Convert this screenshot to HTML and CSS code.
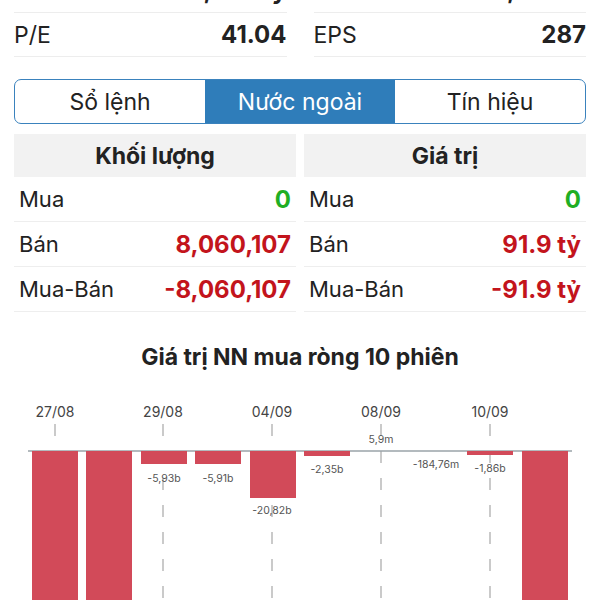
FILE: index.html
```html
<!DOCTYPE html>
<html lang="vi">
<head>
  <meta charset="UTF-8" />
  <meta name="viewport" content="width=device-width, initial-scale=1.0" />
  <title>Nước ngoài</title>
  <link rel="stylesheet" href="styles.css">
</head>
<body>
  <div class="page">
    <div class="stats">
      <div class="stat"><span>Vốn hóa</span><b>4,823 tỷ</b></div>
      <div class="stat"><span>KLCP</span><b>1,690 tr</b></div>
      <div class="stat"><span>P/E</span><b>41.04</b></div>
      <div class="stat"><span>EPS</span><b>287</b></div>
    </div>

    <div class="tabs">
      <div class="tab">Sổ lệnh</div>
      <div class="tab active">Nước ngoài</div>
      <div class="tab">Tín hiệu</div>
    </div>

    <div class="foreign">
      <div class="col">
        <div class="col-head">Khối lượng</div>
        <div class="row"><span>Mua</span><b class="up">0</b></div>
        <div class="row"><span>Bán</span><b class="down">8,060,107</b></div>
        <div class="row"><span>Mua-Bán</span><b class="down">-8,060,107</b></div>
      </div>
      <div class="col">
        <div class="col-head">Giá trị</div>
        <div class="row"><span>Mua</span><b class="up">0</b></div>
        <div class="row"><span>Bán</span><b class="down">91.9 tỷ</b></div>
        <div class="row"><span>Mua-Bán</span><b class="down">-91.9 tỷ</b></div>
      </div>
    </div>

    <h2 class="chart-title">Giá trị NN mua ròng 10 phiên</h2>
  </div>

  <svg class="chart" viewBox="0 0 600 230" width="600" height="230">
    <g class="dates">
      <text x="55" y="30">27/08</text>
      <text x="163" y="30">29/08</text>
      <text x="272" y="30">04/09</text>
      <text x="381" y="30">08/09</text>
      <text x="490" y="30">10/09</text>
    </g>
    <g class="grid">
      <line x1="55" y1="43" x2="55" y2="230" />
      <line x1="163" y1="43" x2="163" y2="230" />
      <line x1="272" y1="43" x2="272" y2="230" />
      <line x1="381" y1="43" x2="381" y2="230" />
      <line x1="490" y1="43" x2="490" y2="230" />
    </g>
    <line class="zero" x1="28" y1="70" x2="572" y2="70" />
    <g class="bars">
      <rect x="32" y="70" width="46" height="160" />
      <rect x="86" y="70" width="46" height="160" />
      <rect x="141" y="70" width="46" height="13" />
      <rect x="195" y="70" width="46" height="13" />
      <rect x="250" y="70" width="46" height="47" />
      <rect x="304" y="70" width="46" height="5" />
      <rect x="467" y="70" width="46" height="4" />
      <rect x="522" y="70" width="46" height="160" />
    </g>
    <g class="values">
      <text x="164" y="97">-5,93b</text>
      <text x="218" y="97">-5,91b</text>
      <text x="272" y="129">-20,82b</text>
      <text x="327" y="88">-2,35b</text>
      <text x="381" y="58">5,9m</text>
      <text x="436" y="83">-184,76m</text>
      <text x="490" y="87">-1,86b</text>
    </g>
  </svg>
</body>
</html>
```

FILE: styles.css
```css
body {
  margin: 0;
  font-family: Inter, "Noto Sans", sans-serif;
  color: #222;
  background: #fff;
  overflow: hidden;
}
.page {
  padding: 0 14px;
  margin-top: -31px;
}
.stats {
  display: grid;
  grid-template-columns: 1fr 1fr;
  column-gap: 27px;
}
.stat {
  display: flex;
  justify-content: space-between;
  align-items: center;
  height: 43px;
  border-bottom: 1px solid #ededed;
  font-size: 23px;
}
.stat b {
  font-size: 24px;
  font-weight: 700;
}
.tabs {
  display: flex;
  margin-top: 22px;
  height: 43px;
  border: 1.5px solid #3a82bd;
  border-radius: 7px;
  overflow: hidden;
}
.tab {
  flex: 1;
  display: flex;
  align-items: center;
  justify-content: center;
  font-size: 23px;
  color: #222;
}
.tab.active {
  background-color: #2f7dba;
  color: #fff;
}
.foreign {
  display: grid;
  grid-template-columns: 1fr 1fr;
  column-gap: 8px;
  margin-top: 10px;
}
.col-head {
  height: 43px;
  background-color: #f2f2f2;
  display: flex;
  align-items: center;
  justify-content: center;
  font-size: 23px;
  font-weight: 700;
}
.row {
  display: flex;
  justify-content: space-between;
  align-items: center;
  height: 44px;
  padding: 0 5px;
  border-bottom: 1px solid #eeeeee;
  font-size: 22px;
}
.row b {
  font-size: 24px;
  font-weight: 700;
}
.up {
  color: #1fae24;
}
.down {
  color: #c3141c;
}
.chart-title {
  margin: 31px 0 0;
  text-align: center;
  font-size: 23px;
  line-height: 28px;
  font-weight: 700;
}
.chart {
  display: block;
  margin-top: 10px;
}
.dates text {
  font-size: 14px;
  fill: #444;
  text-anchor: middle;
  dominant-baseline: central;
}
.grid line {
  stroke: #a7a7a7;
  stroke-width: 1.2;
  stroke-dasharray: 12 15;
}
.zero {
  stroke: #9aa3a8;
  stroke-width: 1.5;
}
.bars rect {
  fill: #d24a59;
}
.values text {
  font-size: 10.5px;
  fill: #555;
  text-anchor: middle;
  dominant-baseline: central;
}
```
